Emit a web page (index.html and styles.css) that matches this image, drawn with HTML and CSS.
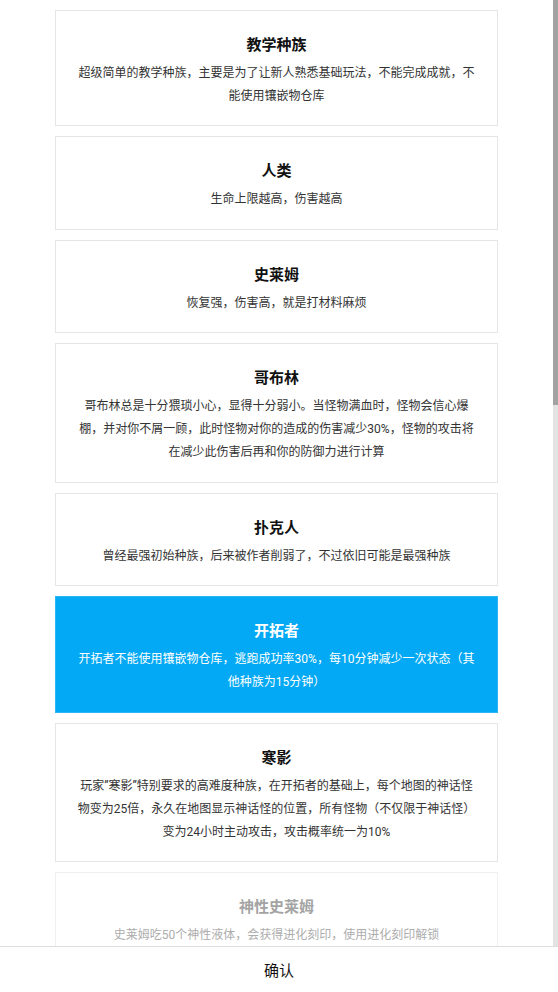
FILE: index.html
```html
<!DOCTYPE html>
<html lang="zh-CN">
<head>
<meta charset="utf-8">
<title>选择种族</title>
<link rel="stylesheet" href="styles.css">
</head>
<body>
<div class="app">
  <div class="viewport">
    <div class="list">
      <div class="card">
        <div class="name">教学种族</div>
        <div class="desc">超级简单的教学种族，主要是为了让新人熟悉基础玩法，不能完成成就，不<br>能使用镶嵌物仓库</div>
      </div>
      <div class="card">
        <div class="name">人类</div>
        <div class="desc">生命上限越高，伤害越高</div>
      </div>
      <div class="card">
        <div class="name">史莱姆</div>
        <div class="desc">恢复强，伤害高，就是打材料麻烦</div>
      </div>
      <div class="card">
        <div class="name">哥布林</div>
        <div class="desc">哥布林总是十分猥琐小心，显得十分弱小。当怪物满血时，怪物会信心爆<br>棚，并对你不屑一顾，此时怪物对你的造成的伤害减少30%，怪物的攻击将<br>在减少此伤害后再和你的防御力进行计算</div>
      </div>
      <div class="card">
        <div class="name">扑克人</div>
        <div class="desc">曾经最强初始种族，后来被作者削弱了，不过依旧可能是最强种族</div>
      </div>
      <div class="card active">
        <div class="name">开拓者</div>
        <div class="desc">开拓者不能使用镶嵌物仓库，逃跑成功率30%，每10分钟减少一次状态（其<br>他种族为15分钟）</div>
      </div>
      <div class="card">
        <div class="name">寒影</div>
        <div class="desc">玩家”寒影”特别要求的高难度种族，在开拓者的基础上，每个地图的神话怪<br>物变为25倍，永久在地图显示神话怪的位置，所有怪物（不仅限于神话怪）<br>变为24小时主动攻击，攻击概率统一为10%</div>
      </div>
      <div class="card disabled">
        <div class="name">神性史莱姆</div>
        <div class="desc">史莱姆吃50个神性液体，会获得进化刻印，使用进化刻印解锁</div>
      </div>
    </div>
    <div class="scrollbar"><div class="thumb"></div></div>
  </div>
  <div class="footer">确认</div>
</div>
</body>
</html>
```
FILE: styles.css
```css
html, body {
  margin: 0;
  padding: 0;
  background: #ffffff;
}

body {
  font-family: Roboto, "Noto Sans CJK SC", sans-serif;
}

.app {
  display: flex;
  flex-direction: column;
  height: 992px;
  overflow: hidden;
}

.viewport {
  flex: 0 0 946px;
  display: flex;
  overflow: hidden;
}

.list {
  flex: 1;
  min-width: 0;
  display: flex;
  flex-direction: column;
  gap: 10px;
  padding: 9.5px 55px 0;
  overflow: hidden;
}

.card {
  flex: none;
  border: 1px solid #e6e6e6;
  padding: 20px 10px 17.5px;
  text-align: center;
  background: #ffffff;
}

.name {
  font-size: 15px;
  font-weight: bold;
  line-height: 29px;
  color: #111111;
}

.desc {
  margin-top: 2px;
  font-size: 12px;
  line-height: 23px;
  color: #333333;
  white-space: nowrap;
}

.card.active {
  background: #03a9f4;
  border-color: #2bb5f5;
}

.card.active .name,
.card.active .desc {
  color: #ffffff;
}

.card.disabled {
  border-color: #f0f0f0;
}

.card.disabled .name {
  color: #a3a3a3;
}

.card.disabled .desc {
  color: #adadad;
}

.scrollbar {
  flex: 0 0 5px;
  background: #e3e3e3;
}

.thumb {
  height: 405px;
  background: #a3a3a3;
}

.footer {
  flex: 1;
  border-top: 1px solid #dddddd;
  display: flex;
  align-items: center;
  justify-content: center;
  font-size: 15px;
  color: #111111;
}
```
